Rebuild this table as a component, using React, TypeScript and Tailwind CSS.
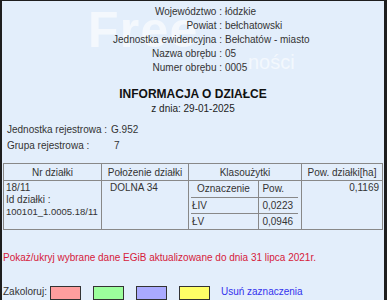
import React from 'react'

const top = [
  ['Województwo', 'łódzkie'],
  ['Powiat', 'bełchatowski'],
  ['Jednostka ewidencyjna', 'Bełchatów - miasto'],
  ['Nazwa obrębu', '05'],
  ['Numer obrębu', '0005'],
]

const swatches = ['bg-[#ff9e9e]', 'bg-[#9cff9c]', 'bg-[#aaaaff]', 'bg-[#ffff66]']

const App = () => {
  return (
    <div className="h-[300px] w-[387px] overflow-hidden bg-[#e3eefb] border-l-2 border-r-[3px] border-t border-solid border-[#1e1e1e]">
      <div className="relative font-[Liberation_Sans,Arial,sans-serif] text-[10px] text-[#333]">
        <div className="pointer-events-none absolute left-[86px] top-[-8px] text-[50px] font-bold tracking-wide text-white/60">Free</div>
        <div className="pointer-events-none absolute left-[246px] top-[46px] text-[20px] text-white/60">ności</div>

        <div className="relative flex flex-col items-center pt-[4px]">
          {top.map(([k, v]) => (
            <div key={k} className="grid w-full grid-cols-[220px_1fr] leading-[14px]">
              <span className="text-right">{k} :</span>
              <span className="pl-[3px]">{v}</span>
            </div>
          ))}
          <h1 className="mt-[11px] text-[12px] font-bold leading-[16px] text-[#111]">INFORMACJA O DZIAŁCE</h1>
          <div className="leading-[13px] text-[#222]">z dnia: 29-01-2025</div>
        </div>

        <div className="relative mt-[7px] grid grid-cols-[auto_1fr] gap-x-[4px] pl-[5px] leading-[16px]">
          <span className="whitespace-nowrap">Jednostka rejestrowa :</span>
          <span>G.952</span>
          <span>Grupa rejestrowa :</span>
          <span className="pl-[3px]">7</span>
        </div>

        <table className="relative ml-[1px] mt-[9px] w-[380px] table-fixed border-collapse border border-[#555]">
          <colgroup>
            <col className="w-[98px]" />
            <col className="w-[87px]" />
            <col className="w-[113px]" />
            <col />
          </colgroup>
          <thead>
            <tr className="h-[17px]">
              <th className="border border-[#888] font-normal">Nr działki</th>
              <th className="border border-[#888] font-normal">Położenie działki</th>
              <th className="border border-[#888] font-normal">Klasoużytki</th>
              <th className="border border-[#888] font-normal">Pow. działki[ha]</th>
            </tr>
          </thead>
          <tbody>
            <tr className="align-top">
              <td className="border border-[#888] px-[2px] pt-[1px] leading-[12px]">
                18/11
                <br />
                Id działki :
                <br />
                <span className="text-[9.5px]">100101_1.0005.18/11</span>
              </td>
              <td className="border border-[#888] pl-[8px] pt-[1px] leading-[12px]">DOLNA 34</td>
              <td className="border border-[#888] px-[2px]">
                <table className="w-[107px] border-collapse">
                  <tbody>
                    <tr className="h-[16px]">
                      <td className="border-b border-[#888] pl-[6px]">Oznaczenie</td>
                      <td className="border-b border-l border-[#888] pl-[3px]">Pow.</td>
                    </tr>
                    <tr className="h-[16px]">
                      <td className="border-b border-[#888] pl-[1px]">ŁIV</td>
                      <td className="border-b border-l border-[#888] pl-[3px]">0,0223</td>
                    </tr>
                    <tr className="h-[16px]">
                      <td className="pl-[1px]">ŁV</td>
                      <td className="border-l border-[#888] pl-[3px]">0,0946</td>
                    </tr>
                  </tbody>
                </table>
              </td>
              <td className="border border-[#888] pr-[3px] pt-[1px] text-right leading-[12px]">0,1169</td>
            </tr>
          </tbody>
        </table>

        <p className="relative mt-[21px] pl-[1px] leading-[14px] text-[#d6203a]">Pokaż/ukryj wybrane dane EGiB aktualizowane do dnia 31 lipca 2021r.</p>

        <div className="relative mt-[20px] flex items-start pl-[1px] leading-[14px]">
          <span className="mr-[3px]">Zakoloruj:</span>
          <div className="flex gap-[12px]">
            {swatches.map((c) => (
              <span key={c} className={`mt-[1px] h-[14px] w-[31px] border border-[#333] ${c}`} />
            ))}
          </div>
          <span className="ml-[11px] text-[#3333ee]">Usuń zaznaczenia</span>
        </div>
      </div>
    </div>
  )
}

export default App
